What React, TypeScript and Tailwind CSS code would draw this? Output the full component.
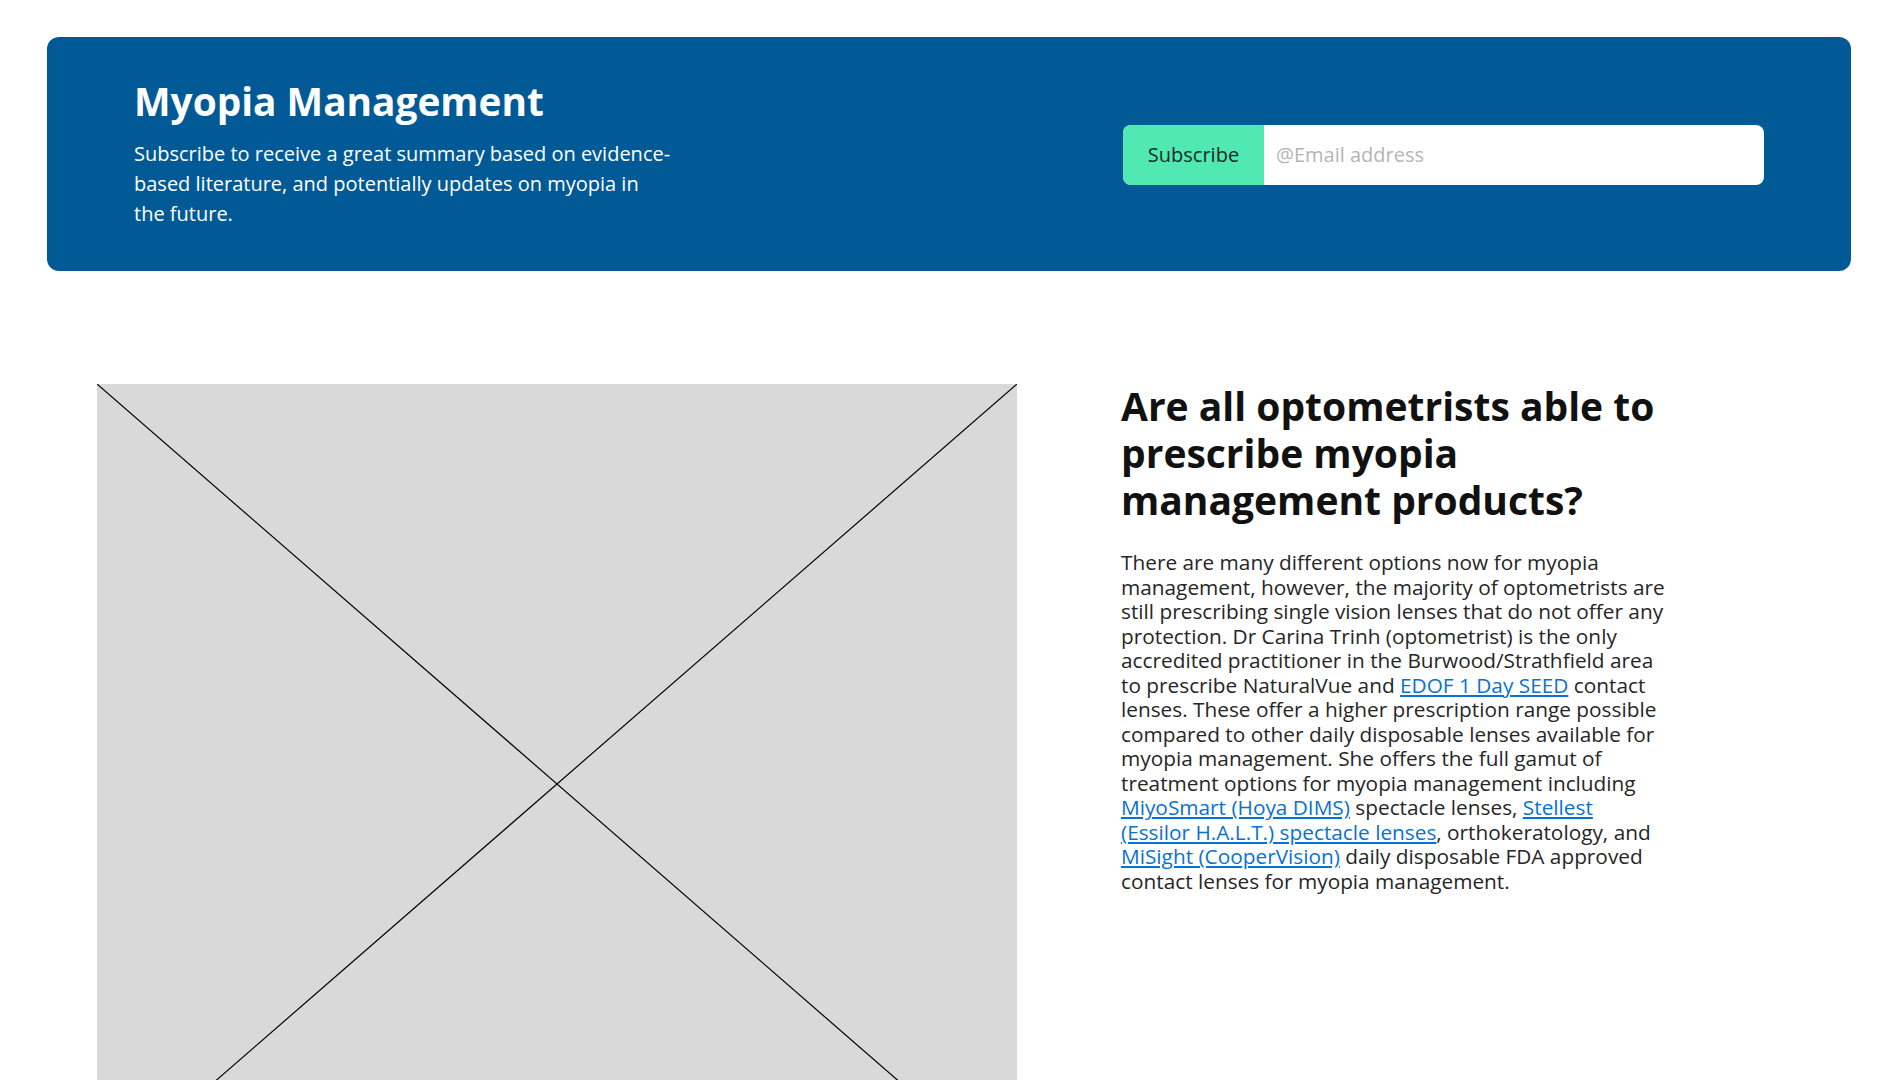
const links = "text-[#0a72d1] underline underline-offset-2";

const SubscribeBanner = () => {
  return (
    <section className="mx-[47px] mt-[37px] flex items-center justify-between rounded-[12px] bg-[#015a96] px-[87px] pt-[40px] pb-[42px]">
      <div className="flex flex-col">
        <h1 className="text-[38.8px] font-bold leading-[48px] text-white">
          Myopia Management
        </h1>
        <p className="mt-[14px] max-w-[539px] text-[20px] leading-[30px] text-white">
          Subscribe to receive a great summary based on evidence-based
          literature, and potentially updates on myopia in the future.
        </p>
      </div>

      <form className="mt-[3px] flex h-[60px] w-[641px] overflow-hidden rounded-[8px] bg-white">
        <button
          type="button"
          className="w-[141px] shrink-0 bg-[#50e9b3] text-[20px] text-[#1c2b25]"
        >
          Subscribe
        </button>
        <input
          type="email"
          placeholder="@Email address"
          className="flex-1 px-[12px] text-[20px] text-[#333] outline-none placeholder:text-[#b5b5b5]"
        />
      </form>
    </section>
  );
};

const ImagePlaceholder = () => {
  return (
    <div className="relative h-[800px] w-[920px] shrink-0 bg-[#d9d9d9]">
      <svg
        className="absolute inset-0 h-full w-full"
        viewBox="0 0 920 800"
        preserveAspectRatio="none"
      >
        <line x1="0" y1="0" x2="920" y2="800" stroke="#000" strokeWidth="1.2" />
        <line x1="920" y1="0" x2="0" y2="800" stroke="#000" strokeWidth="1.2" />
      </svg>
    </div>
  );
};

export default function App() {
  return (
    <div
      className="min-h-screen bg-white pb-[40px]"
      style={{ fontFamily: '"Open Sans", "Noto Sans", sans-serif' }}
    >
      <SubscribeBanner />

      <main className="ml-[97px] mt-[113px] flex items-start gap-[104px]">
        <ImagePlaceholder />

        <div className="-mt-[2px] w-[545px]">
          <h2 className="text-[39px] font-bold leading-[47px] text-[#111]">
            Are all optometrists able to prescribe myopia management products?
          </h2>
          <p className="mt-[27px] text-[20.8px] leading-[24.5px] text-[#262626]">
            There are many different options now for myopia management,
            however, the majority of optometrists are still prescribing single
            vision lenses that do not offer any protection. Dr Carina Trinh
            (optometrist) is the only accredited practitioner in the
            Burwood/Strathfield area to prescribe NaturalVue and{" "}
            <a href="#" className={links}>
              EDOF 1 Day SEED
            </a>{" "}
            contact lenses. These offer a higher prescription range possible
            compared to other daily disposable lenses available for myopia
            management. She offers the full gamut of treatment options for
            myopia management including{" "}
            <a href="#" className={links}>
              MiyoSmart (Hoya DIMS)
            </a>{" "}
            spectacle lenses,{" "}
            <a href="#" className={links}>
              Stellest (Essilor H.A.L.T.) spectacle lenses
            </a>
            , orthokeratology, and{" "}
            <a href="#" className={links}>
              MiSight (CooperVision)
            </a>{" "}
            daily disposable FDA approved contact lenses for myopia management.
          </p>
        </div>
      </main>
    </div>
  );
}
